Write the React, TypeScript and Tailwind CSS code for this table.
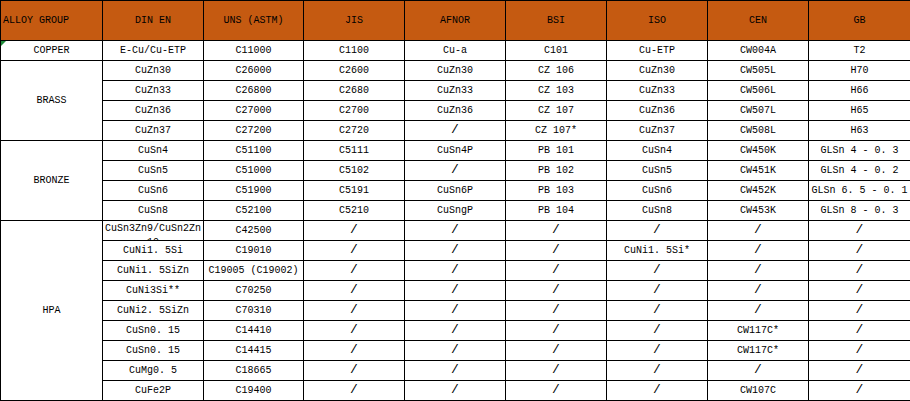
const headers = ["ALLOY GROUP", "DIN EN", "UNS (ASTM)", "JIS", "AFNOR", "BSI", "ISO", "CEN", "GB"];

type Group = { name: string; rows: string[][] };

const groups: Group[] = [
  {
    name: "COPPER",
    rows: [["E-Cu/Cu-ETP", "C11000", "C1100", "Cu-a", "C101", "Cu-ETP", "CW004A", "T2"]],
  },
  {
    name: "BRASS",
    rows: [
      ["CuZn30", "C26000", "C2600", "CuZn30", "CZ 106", "CuZn30", "CW505L", "H70"],
      ["CuZn33", "C26800", "C2680", "CuZn33", "CZ 103", "CuZn33", "CW506L", "H66"],
      ["CuZn36", "C27000", "C2700", "CuZn36", "CZ 107", "CuZn36", "CW507L", "H65"],
      ["CuZn37", "C27200", "C2720", "/", "CZ 107*", "CuZn37", "CW508L", "H63"],
    ],
  },
  {
    name: "BRONZE",
    rows: [
      ["CuSn4", "C51100", "C5111", "CuSn4P", "PB 101", "CuSn4", "CW450K", "GLSn 4 - 0. 3"],
      ["CuSn5", "C51000", "C5102", "/", "PB 102", "CuSn5", "CW451K", "GLSn 4 - 0. 2"],
      ["CuSn6", "C51900", "C5191", "CuSn6P", "PB 103", "CuSn6", "CW452K", "GLSn 6. 5 - 0. 1"],
      ["CuSn8", "C52100", "C5210", "CuSngP", "PB 104", "CuSn8", "CW453K", "GLSn 8 - 0. 3"],
    ],
  },
  {
    name: "HPA",
    rows: [
      ["CuSn3Zn9/CuSn2Zn10", "C42500", "/", "/", "/", "/", "/", "/"],
      ["CuNi1. 5Si", "C19010", "/", "/", "/", "CuNi1. 5Si*", "/", "/"],
      ["CuNi1. 5SiZn", "C19005 (C19002)", "/", "/", "/", "/", "/", "/"],
      ["CuNi3Si**", "C70250", "/", "/", "/", "/", "/", "/"],
      ["CuNi2. 5SiZn", "C70310", "/", "/", "/", "/", "/", "/"],
      ["CuSn0. 15", "C14410", "/", "/", "/", "/", "CW117C*", "/"],
      ["CuSn0. 15", "C14415", "/", "/", "/", "/", "CW117C*", "/"],
      ["CuMg0. 5", "C18665", "/", "/", "/", "/", "/", "/"],
      ["CuFe2P", "C19400", "/", "/", "/", "/", "CW107C", "/"],
    ],
  },
];

function Cell({ value }: { value: string }) {
  if (value === "/") {
    return (
      <td className="h-[20px] border border-black p-0 text-center align-middle">
        <span className="inline-block text-[13px] leading-none">/</span>
      </td>
    );
  }
  if (value.length > 16) {
    // too long for the column: wraps and the second line gets cut off
    return (
      <td className="h-[20px] border border-black p-0 align-top">
        <div className="h-[19px] overflow-hidden px-[1px] pt-[1px] text-center leading-[14px] break-all">
          {value}
        </div>
      </td>
    );
  }
  return (
    <td className="h-[20px] border border-black p-0 text-center align-middle whitespace-nowrap">
      {value}
    </td>
  );
}

export default function App() {
  return (
    <div className="w-[910px] h-[401px] overflow-hidden bg-white">
      <table
        className="table-fixed border-collapse text-[10px] text-black"
        style={{ fontFamily: '"Liberation Mono", "DejaVu Sans Mono", monospace', width: 910 }}
      >
        <colgroup>
          <col className="w-[102px]" />
          <col className="w-[101px]" />
          <col className="w-[100px]" />
          <col className="w-[101px]" />
          <col className="w-[101px]" />
          <col className="w-[101px]" />
          <col className="w-[101px]" />
          <col className="w-[101px]" />
          <col className="w-[102px]" />
        </colgroup>
        <thead>
          <tr>
            {headers.map((h, i) => (
              <th
                key={h}
                className={`h-[40px] border border-black bg-[#c55a11] p-0 font-normal whitespace-nowrap ${
                  i === 0 ? "pl-[2px] text-left" : "text-center"
                }`}
              >
                {h}
              </th>
            ))}
          </tr>
        </thead>
        <tbody>
          {groups.map((g) =>
            g.rows.map((row, ri) => (
              <tr key={g.name + ri}>
                {ri === 0 && (
                  <td rowSpan={g.rows.length} className="relative border border-black p-0 text-center align-middle">
                    {g.name === "COPPER" && (
                      <span className="absolute left-0 top-0 h-0 w-0 border-t-[5px] border-r-[5px] border-t-[#1e8a3a] border-r-transparent" />
                    )}
                    {g.name}
                  </td>
                )}
                {row.map((v, ci) => (
                  <Cell key={ci} value={v} />
                ))}
              </tr>
            ))
          )}
        </tbody>
      </table>
    </div>
  );
}
